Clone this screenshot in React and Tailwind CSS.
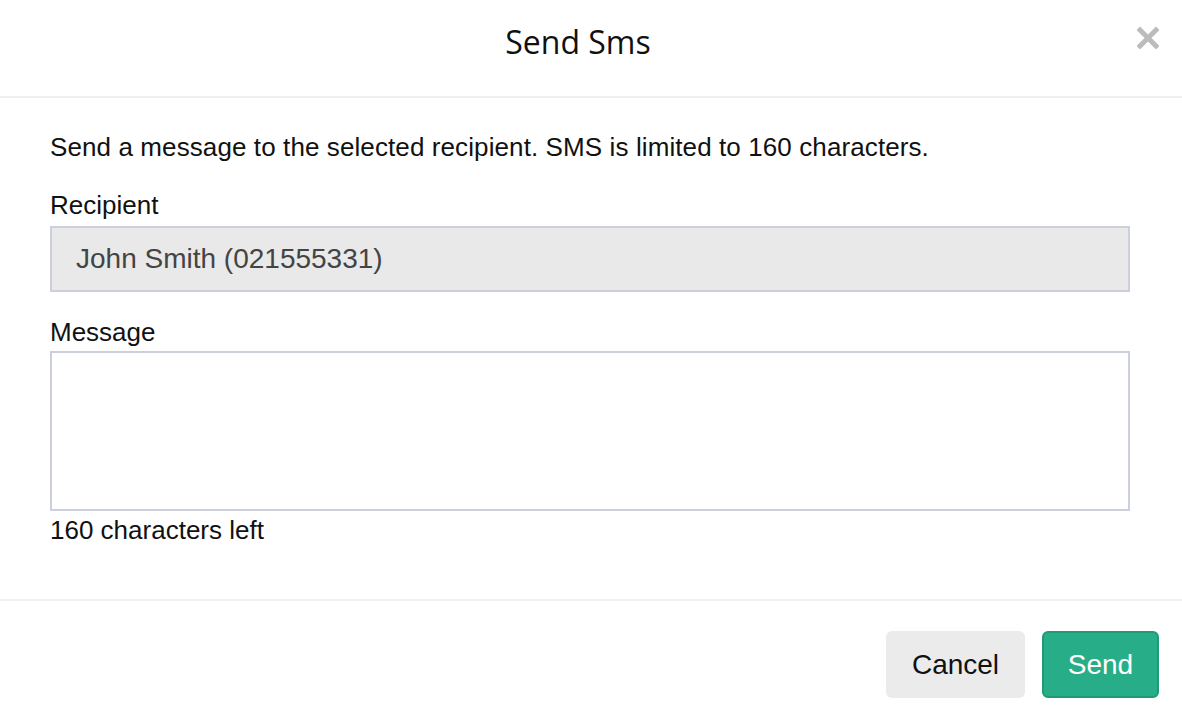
export default function App() {
  const max = 160;
  const message = '';

  return (
    <div className="w-[1182px] h-[720px] bg-white text-[#111] font-['Liberation_Sans',Arial,sans-serif]">
      {/* header */}
      <div className="relative h-[98px] flex items-center justify-center pr-[26px] border-b-2 border-[#efefef]">
        <h1 className="text-[32px] leading-none font-['Open_Sans',sans-serif] text-[#111] -mt-[12px]">Send Sms</h1>
        <button className="absolute right-[23px] top-[27px] w-[22px] h-[22px]" aria-label="Close">
          <svg viewBox="0 0 22 22" className="w-[22px] h-[22px]">
            <path d="M3 3 L19 19 M19 3 L3 19" stroke="#bcbcbc" strokeWidth="5" strokeLinecap="square" />
          </svg>
        </button>
      </div>

      {/* body */}
      <div className="pl-[50px] pr-[52px] pt-[34px] pb-[54px] text-[26px] leading-[30px]">
        <p className="tracking-[0.1px]">Send a message to the selected recipient. SMS is limited to 160 characters.</p>

        <label className="block mt-[28px]">Recipient</label>
        <div className="mt-[6px] h-[66px] flex items-center px-[24px] bg-[#e9e9e9] border-2 border-[#ccd0dc] text-[#444] text-[28px]">
          John Smith (021555331)
        </div>

        <label className="block mt-[25px]">Message</label>
        <textarea
          className="block mt-[4px] w-full h-[160px] border-2 border-[#ccd0dc] resize-none outline-none px-[24px] py-[14px]"
          defaultValue={message}
        />
        <div className="mt-[4px]">{max - message.length} characters left</div>
      </div>

      {/* footer */}
      <div className="border-t-2 border-[#efefef] pt-[30px] pr-[23px] flex justify-end gap-[17px] text-[28px]">
        <button className="w-[139px] h-[67px] rounded-[6px] bg-[#ebebeb] text-[#111]">Cancel</button>
        <button className="w-[117px] h-[67px] rounded-[6px] bg-[#27ae88] border-2 border-[#1f9a77] text-white">Send</button>
      </div>
    </div>
  );
}
